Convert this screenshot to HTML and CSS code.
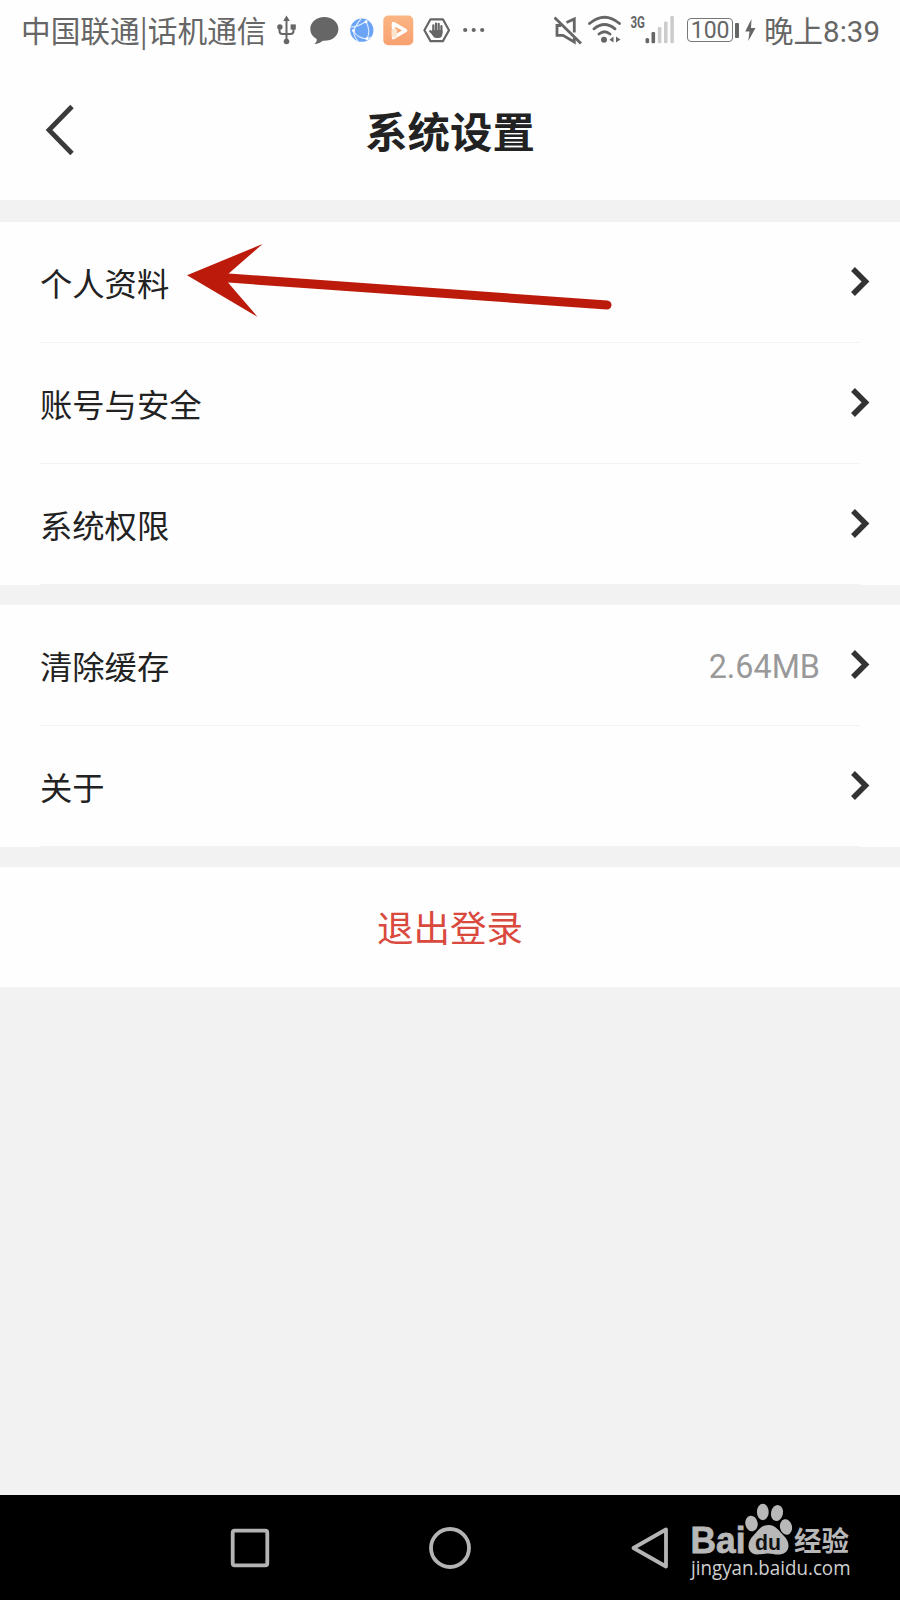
FILE: index.html
```
<!DOCTYPE html>
<html lang="zh-CN">
  <head>
    <meta charset="UTF-8" />
    <meta name="viewport" content="width=device-width, initial-scale=1.0" />
    <title>系统设置</title>
    <link rel="stylesheet" href="styles.css">
  </head>
  <body>
    <div id="statusbar">
      <div class="status-left">
        <span class="carrier">中国联通|话机通信</span>
        <svg class="usb" width="20" height="60" viewBox="0 0 20 60" fill="none" stroke="#666" stroke-width="2">
          <path d="M9.5 40V19M2.5 27v4q0 3 3 3h8q3 0 3-3v-4" />
          <path d="M9.5 15.5l3.3 5.5H6.2z" fill="#666" stroke="none" />
          <circle cx="9.5" cy="41.5" r="2.8" fill="#666" stroke="none" />
          <circle cx="2.9" cy="27" r="2.7" fill="#666" stroke="none" />
          <rect x="13.6" y="24.4" width="5.2" height="5.2" fill="#666" stroke="none" />
        </svg>
        <svg class="chat" width="29" height="60" viewBox="0 0 29 60">
          <path d="M14.3 17C6.4 17 .3 22.3.3 29c0 4.3 2.4 7.7 6.4 10 .3 2-.5 3.5-2.2 5 3.5-.1 6-1.2 8.3-3.2 8.8.6 15.6-4.6 15.6-11.8C28.4 22.3 22.2 17 14.3 17z" fill="#666" />
        </svg>
        <svg class="globe" width="24" height="60" viewBox="0 0 24 60">
          <circle cx="11.8" cy="30.2" r="11.6" fill="#6ba4f5" />
          <g fill="none" stroke="#dcebff" stroke-width="1.1">
            <path d="M1 27Q8 27 16 21.500Q21 31 17 39Q7 38 3.500 31Q7 23 11 19" />
            <path d="M16 21.500L18 19M17 39L21 37M3.500 31Q4 37 8 41" />
          </g>
          <g fill="#fff">
            <circle cx="16" cy="21.8" r="1.5" />
            <circle cx="17" cy="38.5" r="1.5" />
            <circle cx="3.5" cy="30.5" r="1.5" />
          </g>
        </svg>
        <svg class="video" width="31" height="60" viewBox="0 0 31 60">
          <defs>
            <linearGradient id="orange" x1="0" y1="0" x2="0" y2="1">
              <stop offset="0" stop-color="#fbb683" />
              <stop offset="1" stop-color="#f8a070" />
            </linearGradient>
          </defs>
          <rect x=".3" y="15.5" width="30" height="29.7" rx="5" fill="url(#orange)" />
          <path d="M10.5 28V23.5L22.5 30.5L10.5 37.5" fill="none" stroke="#fff" stroke-width="3.6" stroke-linejoin="round" stroke-linecap="round" />
          <rect x="8.5" y="28.5" width="5.5" height="9" rx="2" fill="#ffe4d0" />
        </svg>
        <svg class="hand" width="28" height="60" viewBox="0 0 28 60">
          <path d="M7.5 19.300h12.400L26 30.200l-6.100 10.900H7.500L1.400 30.200z" fill="none" stroke="#666" stroke-width="2.2" stroke-linejoin="round" />
          <path d="M10.3 33V25.300M13 33V23.600M15.700 33V23.800M18.400 33V26M7.200 31.200L10.500 34" fill="none" stroke="#666" stroke-width="2.2" stroke-linecap="round" />
          <path d="M9.300 30h10.100v3.500q0 4.500-4 4.500h-2.300q-2 0-3.200-2L7.500 32z" fill="#666" />
        </svg>
        <svg class="more" width="22" height="60" viewBox="0 0 22 60" fill="#666">
          <circle cx="2.2" cy="30" r="2.1" />
          <circle cx="10.7" cy="30" r="2.1" />
          <circle cx="19.2" cy="30" r="2.1" />
        </svg>
      </div>
      <div class="status-right">
        <svg class="mute" width="28" height="60" viewBox="0 0 28 60" fill="none" stroke="#666" stroke-width="2.8">
          <path d="M.5 17.500L27 43.500" />
          <path d="M12.500 22.500L20.300 19V32.500" />
          <path d="M7 25.500H3V35.300H9L20.300 42V38" />
        </svg>
        <svg class="wifi" width="34" height="60" viewBox="0 0 34 60" fill="none" stroke="#666" stroke-width="2.8" stroke-linecap="round">
          <path d="M1.500 23.500Q16.500 11 31.500 23.500M6 28.800Q16.500 20.200 27 28.800M11 34Q16.500 29.500 22 34" />
          <circle cx="16" cy="39.7" r="3" fill="#666" stroke="none" />
          <path d="M25.500 36.500v6l-4-2.800zM28 36.500v6l4.500-3z" fill="#666" stroke="none" />
        </svg>
        <svg class="signal" width="45" height="60" viewBox="0 0 45 60">
          <text class="net" x=".5" y="27.5" textLength="14.5" lengthAdjust="spacingAndGlyphs">3G</text>
          <g fill="#666">
            <rect x="15.5" y="38" width="3.6" height="5.2" rx="1.5" />
            <rect x="21.5" y="32" width="3.6" height="11.2" rx="1.2" />
          </g>
          <g fill="#ccc">
            <rect x="27.8" y="27" width="3.6" height="16.2" rx="1.2" />
            <rect x="34" y="21.5" width="3.6" height="21.7" rx="1.2" />
            <rect x="40.3" y="16" width="3.6" height="27.2" rx="1.2" />
          </g>
        </svg>
        <div class="battery">100</div>
        <div class="battery-tip"></div>
        <svg class="bolt" width="11" height="60" viewBox="0 0 11 60">
          <path d="M6.500 19L.2 31.500H4.500L3.300 41L10.500 28H6z" fill="#666" />
        </svg>
        <span class="time">晚上8:39</span>
      </div>
    </div>

    <div id="header">
      <svg class="back" width="30" height="54" viewBox="0 0 30 54">
        <path d="M27 3.500L4 27L27 50.500" fill="none" stroke="#3a3a3a" stroke-width="4.800" />
      </svg>
      <h1>系统设置</h1>
    </div>

    <div class="group">
      <div class="row">
        <span class="label">个人资料</span>
        <svg class="chevron" width="20" height="32" viewBox="0 0 20 32"><path d="M3 3L15.500 15.500L3 28" /></svg>
        <svg class="arrow" width="430" height="80" viewBox="185 240 430 80">
          <path d="M225 277.800L607 305" stroke="#bc1a0a" stroke-width="9" stroke-linecap="round" />
          <path d="M187 275.300L262.500 244L227 275L228 282.500L257.500 316.800z" fill="#bc1a0a" />
        </svg>
      </div>
      <div class="row">
        <span class="label">账号与安全</span>
        <svg class="chevron" width="20" height="32" viewBox="0 0 20 32"><path d="M3 3L15.500 15.500L3 28" /></svg>
      </div>
      <div class="row">
        <span class="label">系统权限</span>
        <svg class="chevron" width="20" height="32" viewBox="0 0 20 32"><path d="M3 3L15.500 15.500L3 28" /></svg>
      </div>
    </div>

    <div class="group">
      <div class="row">
        <span class="label">清除缓存</span>
        <span class="size">2.64MB</span>
        <svg class="chevron" width="20" height="32" viewBox="0 0 20 32"><path d="M3 3L15.500 15.500L3 28" /></svg>
      </div>
      <div class="row">
        <span class="label">关于</span>
        <svg class="chevron" width="20" height="32" viewBox="0 0 20 32"><path d="M3 3L15.500 15.500L3 28" /></svg>
      </div>
    </div>

    <div id="logout">退出登录</div>

    <div id="navbar">
      <svg width="46" height="46" viewBox="0 0 46 46"><rect x="5.7" y="5.7" width="34.6" height="34.6" rx="2" /></svg>
      <svg width="46" height="46" viewBox="0 0 46 46"><circle cx="23" cy="23" r="19" /></svg>
      <svg width="46" height="46" viewBox="0 0 46 46"><path d="M39 4.500V41.500L6.500 23z" stroke-linejoin="round" /></svg>
      <svg class="watermark" width="170" height="90" viewBox="685 1500 170 90">
        <text class="bai" x="690.5" y="1553" textLength="55" lengthAdjust="spacingAndGlyphs">Bai</text>
        <ellipse cx="751.5" cy="1523.500" rx="6.200" ry="7.800" transform="rotate(-10 751.500 1523.500)" />
        <ellipse cx="762.8" cy="1512" rx="5.900" ry="8.200" />
        <ellipse cx="777" cy="1513" rx="6" ry="8" transform="rotate(12 777 1513)" />
        <ellipse cx="786" cy="1527" rx="6" ry="7.800" transform="rotate(-12 786 1527)" />
        <path d="M768.500 1525C761 1525 758 1531 753 1536C746 1543 747 1554 757 1554.500C762 1554.500 764 1553.500 768.500 1553.500C773 1553.500 775 1555 780 1554.500C790 1553.500 791 1543 784 1536C779 1531 776 1525 768.500 1525z" />
        <text class="du" x="755" y="1550" textLength="26" lengthAdjust="spacingAndGlyphs">du</text>
        <text class="exp" x="794" y="1551" textLength="55" lengthAdjust="spacingAndGlyphs">经验</text>
        <text class="url" x="691" y="1575" textLength="159.500" lengthAdjust="spacingAndGlyphs">jingyan.baidu.com</text>
      </svg>
    </div>
  </body>
</html>
```
FILE: styles.css
```
* {
  box-sizing: border-box;
}
body {
  margin: 0;
  height: 1600px;
  display: flex;
  flex-direction: column;
  background-color: #f2f2f2;
  font-family: Roboto, "Noto Sans CJK SC", sans-serif;
  color: #222;
}
svg {
  display: block;
  flex: none;
}
#statusbar {
  display: flex;
  justify-content: space-between;
  height: 60px;
  padding: 0 20px 0 21px;
  background-color: #fefefe;
  color: #666;
}
.status-left,
.status-right {
  display: flex;
  align-items: center;
}
.carrier,
.time {
  font-size: 29.5px;
  line-height: 60px;
  white-space: nowrap;
}
.carrier {
  width: 256px;
  font-family: "Noto Sans CJK SC", sans-serif;
  font-size: 29.7px;
  line-height: 58px;
}
.chat {
  margin-left: 13px;
}
.globe {
  margin-left: 11px;
}
.video {
  margin-left: 9px;
}
.hand {
  margin-left: 9px;
}
.more {
  margin-left: 12px;
}
.wifi {
  margin-left: 6px;
}
.signal {
  margin-left: 8px;
}
.net {
  font: bold 16px Roboto, sans-serif;
  fill: #666;
}
.battery {
  width: 46px;
  height: 24px;
  margin-left: 12px;
  border: 1.5px solid #777;
  border-radius: 4px;
  font-size: 23px;
  line-height: 23px;
  text-align: center;
}
.battery-tip {
  width: 4px;
  height: 15px;
  margin-left: 2px;
  border-radius: 1px;
  background-color: #666;
}
.bolt {
  margin-left: 6px;
}
.time {
  margin-left: 8px;
  padding-top: 3px;
}
#header {
  position: relative;
  display: flex;
  align-items: center;
  justify-content: center;
  height: 140px;
  background-color: #fefefe;
}
.back {
  position: absolute;
  left: 45px;
  top: 43px;
}
h1 {
  margin: 0;
  padding-top: 7px;
  font-size: 42.4px;
  line-height: 60px;
  font-weight: bold;
}
.group {
  margin-top: 20px;
  background-color: #fefefe;
}
#header + .group {
  margin-top: 22px;
}
.row {
  position: relative;
  display: flex;
  align-items: center;
  height: 121px;
  margin: 0 40px;
  border-bottom: 1px solid #f2f2f2;
  font-size: 32.3px;
}
.label {
  padding-bottom: 1px;
}
.chevron {
  margin-left: auto;
  margin-right: -10px;
}
.chevron path {
  fill: none;
  stroke: #333;
  stroke-width: 5.5;
}
.size {
  margin-left: auto;
  padding-top: 3px;
  color: #999;
}
.size + .chevron {
  margin-left: 30px;
}
.arrow {
  position: absolute;
  left: 145px;
  top: 18px;
}
#logout {
  height: 120px;
  margin-top: 20px;
  padding-top: 3px;
  background-color: #fefefe;
  color: #d9493e;
  font-size: 36.5px;
  line-height: 120px;
  text-align: center;
}
#navbar {
  position: relative;
  display: flex;
  align-items: center;
  justify-content: center;
  gap: 154px;
  height: 105px;
  margin-top: auto;
  background-color: #000;
}
#navbar > svg {
  fill: none;
  stroke: #b4b4b4;
  stroke-width: 3.8;
}
#navbar .watermark {
  position: absolute;
  left: 685px;
  top: 5px;
  fill: #b8b8b8;
  stroke: none;
}
.bai {
  font: bold 36px "Liberation Sans", sans-serif;
  stroke: #b8b8b8;
  stroke-width: 0.8;
}
.watermark .du {
  font: bold 22px "Liberation Sans", sans-serif;
  fill: #111;
}
.exp {
  font: bold 27px "Noto Sans CJK SC", sans-serif;
}
.url {
  font: 19.5px "Open Sans", sans-serif;
  fill: #d0d0d0;
}
```
